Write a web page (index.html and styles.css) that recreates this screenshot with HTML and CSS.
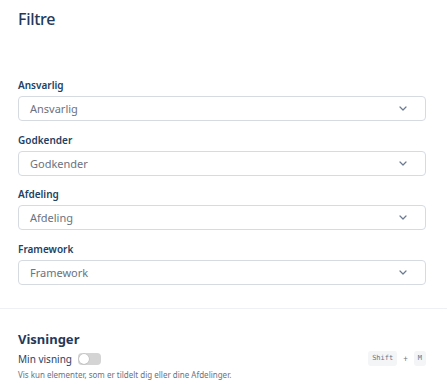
FILE: index.html
```html
<!DOCTYPE html>
<html lang="da">
<head>
    <meta charset="UTF-8">
    <meta name="viewport" content="width=device-width, initial-scale=1.0">
    <title>Filtre</title>
    <link rel="stylesheet" href="styles.css">
</head>
<body>
    <div class="panel">
        <div class="filters">
            <h2 class="title">Filtre</h2>
            <div class="field">
                <label class="label">Ansvarlig</label>
                <div class="select">
                    <span>Ansvarlig</span>
                    <svg class="chev" width="8" height="5" viewBox="0 0 8 5"><path d="M1 1l3 3 3-3" fill="none" stroke="#6b7a90" stroke-width="1.2" stroke-linecap="round" stroke-linejoin="round"/></svg>
                </div>
            </div>
            <div class="field">
                <label class="label">Godkender</label>
                <div class="select">
                    <span>Godkender</span>
                    <svg class="chev" width="8" height="5" viewBox="0 0 8 5"><path d="M1 1l3 3 3-3" fill="none" stroke="#6b7a90" stroke-width="1.2" stroke-linecap="round" stroke-linejoin="round"/></svg>
                </div>
            </div>
            <div class="field">
                <label class="label">Afdeling</label>
                <div class="select">
                    <span>Afdeling</span>
                    <svg class="chev" width="8" height="5" viewBox="0 0 8 5"><path d="M1 1l3 3 3-3" fill="none" stroke="#6b7a90" stroke-width="1.2" stroke-linecap="round" stroke-linejoin="round"/></svg>
                </div>
            </div>
            <div class="field">
                <label class="label">Framework</label>
                <div class="select">
                    <span>Framework</span>
                    <svg class="chev" width="8" height="5" viewBox="0 0 8 5"><path d="M1 1l3 3 3-3" fill="none" stroke="#6b7a90" stroke-width="1.2" stroke-linecap="round" stroke-linejoin="round"/></svg>
                </div>
            </div>
        </div>
        <div class="views">
            <h3 class="subtitle">Visninger</h3>
            <div class="view-row">
                <span class="view-name">Min visning</span>
                <span class="toggle"><span class="knob"></span></span>
                <span class="keys"><kbd>Shift</kbd><span class="plus">+</span><kbd>M</kbd></span>
            </div>
            <p class="hint">Vis kun elementer, som er tildelt dig eller dine Afdelinger.</p>
        </div>
    </div>
</body>
</html>
```

FILE: styles.css
```css
*{
    margin: 0px;
    padding: 0px;
    box-sizing: border-box;
}
body{
    font-family: "Noto Sans", "Open Sans", sans-serif;
    color: #1f3a5c;
    background: #fff;
}
.filters{
    padding: 9px 21px 23px 18px;
    border-bottom: 1px solid #eef0f3;
}
.title{
    font-size: 16px;
    font-weight: 500;
    line-height: 20px;
    letter-spacing: -0.3px;
    color: #1f3a5c;
    margin-bottom: 49px;
}
.field{
    margin-bottom: 11.6px;
}
.field:last-child{
    margin-bottom: 0;
}
.label{
    display: block;
    font-size: 10px;
    font-weight: 600;
    line-height: 14px;
    margin-bottom: 4px;
    color: #233f62;
}
.select{
    height: 25px;
    border: 1px solid #d6dbe2;
    border-radius: 4px;
    display: flex;
    align-items: center;
    justify-content: space-between;
    padding: 0 18px 0 11px;
    font-size: 11px;
    color: #6b7280;
}
.views{
    padding: 22px 21px 0 18px;
}
.subtitle{
    font-size: 13px;
    font-weight: 700;
    line-height: 16px;
}
.view-row{
    display: flex;
    align-items: center;
    margin-top: 4px;
    height: 16px;
}
.view-name{
    font-size: 10px;
    color: #2b4263;
}
.toggle{
    width: 23px;
    height: 12px;
    margin-left: 6px;
    background: #d4d4d4;
    border-radius: 4px;
    position: relative;
}
.knob{
    position: absolute;
    left: 1px;
    top: 1px;
    width: 10px;
    height: 10px;
    border-radius: 50%;
    background: #fff;
    box-shadow: 0 0 0 0.5px #b8b8b8;
}
.keys{
    margin-left: auto;
    display: flex;
    align-items: center;
    gap: 6px;
}
kbd{
    font-family: "DejaVu Sans Mono", monospace;
    font-size: 7px;
    line-height: 15px;
    height: 15px;
    color: #6b7280;
    background: #f4f5f7;
    border-radius: 3px;
    padding: 0 4px;
}
.plus{
    font-size: 8px;
    color: #6b7280;
}
.hint{
    font-size: 8px;
    color: #6b7280;
    margin-top: 2px;
}
```
